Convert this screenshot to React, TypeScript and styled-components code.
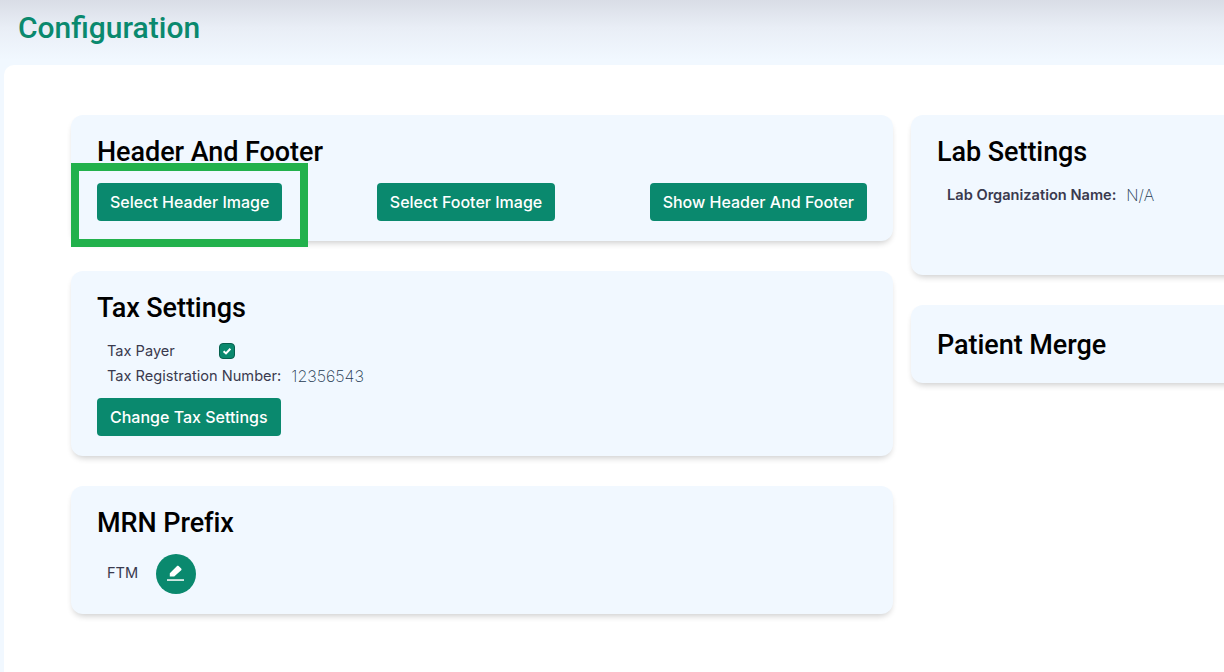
import styled, { createGlobalStyle } from 'styled-components';

const GlobalStyle = createGlobalStyle`
  html, body {
    margin: 0;
    padding: 0;
    height: 672px;
    overflow: hidden;
    background: #f1f8ff;
    font-family: Inter, "Liberation Sans", sans-serif;
  }
`;

const Page = styled.div`
  width: 1224px;
  height: 672px;
  overflow: hidden;
  display: flex;
  flex-direction: column;
  background: linear-gradient(180deg, #d9dde6 0px, #e9eef6 28px, #f1f8ff 60px);
`;

const TopBar = styled.header`
  height: 65px;
  flex: none;
  padding: 10px 0 0 18px;
  box-sizing: border-box;
`;

const PageTitle = styled.h1`
  margin: 0;
  font: 500 30px/36px Roboto, sans-serif;
  color: #0a896e;
`;

const Panel = styled.main`
  flex: 1;
  margin-left: 4px;
  width: 1300px;
  padding: 50px 0 0 67px;
  background: #fff;
  border-radius: 10px 0 0 0;
  display: grid;
  grid-template-columns: 822px 400px;
  column-gap: 18px;
  align-items: start;
`;

const Column = styled.div`
  display: flex;
  flex-direction: column;
  gap: 30px;
`;

const Card = styled.section<{ $height: number }>`
  position: relative;
  box-sizing: border-box;
  height: ${(p) => p.$height}px;
  padding: 21px 26px 0;
  background: #f1f8ff;
  border-radius: 12px;
  box-shadow: 0 4px 6px -2px rgba(0, 0, 0, 0.2);
`;

const CardTitle = styled.h2<{ $offset?: number }>`
  margin: ${(p) => p.$offset ?? 0}px 0 0;
  font: 500 27px/32px Roboto, sans-serif;
  letter-spacing: -0.06px;
  color: #000;
`;

const ButtonRow = styled.div`
  display: flex;
  justify-content: space-between;
  margin-top: 15px;
`;

const ActionButton = styled.button`
  height: 38px;
  padding: 0 13px;
  border: none;
  border-radius: 4px;
  background: #0a896e;
  color: #fff;
  font: 500 16px/38px Inter, sans-serif;
  white-space: nowrap;
`;

const Highlight = styled.div`
  position: absolute;
  left: 0;
  top: 48px;
  width: 237px;
  height: 84px;
  box-sizing: border-box;
  border: 8px solid #22b14c;
`;

const FieldList = styled.div`
  display: flex;
  flex-direction: column;
  gap: 5px;
  margin: 17px 0 12px 10px;
`;

const Field = styled.div`
  display: flex;
  align-items: center;
  height: 20px;
`;

const Label = styled.span<{ $width?: number; $bold?: boolean }>`
  font-size: 14.6px;
  font-weight: ${(p) => (p.$bold ? 600 : 400)};
  color: #3a3a4e;
  white-space: nowrap;
  ${(p) => (p.$width ? `width: ${p.$width}px;` : '')}
`;

const PrefixLabel = styled(Label)`
  padding-bottom: 2px;
`;

const Value = styled.span`
  margin-left: 10px;
  font-size: 16px;
  font-weight: 200;
  color: #1f3a52;
`;

const CheckBox = styled.span`
  width: 16px;
  height: 16px;
  border-radius: 4px;
  background: #0a896e;
  border: 1px solid #06604d;
  box-sizing: border-box;
  display: flex;
  align-items: center;
  justify-content: center;
`;

const PrefixRow = styled.div`
  display: flex;
  align-items: center;
  gap: 18px;
  margin: 15px 0 0 10px;
`;

const IconButton = styled.button`
  width: 40px;
  height: 40px;
  padding: 0;
  border: none;
  border-radius: 50%;
  background: #0a896e;
  display: flex;
  align-items: center;
  justify-content: center;
`;

const LabRow = styled.div`
  display: flex;
  align-items: center;
  margin: 17px 0 0 10px;
`;

export default function App() {
  return (
    <>
      <GlobalStyle />
      <Page>
        <TopBar>
          <PageTitle>Configuration</PageTitle>
        </TopBar>
        <Panel>
          <Column>
            <Card $height={126}>
              <CardTitle>Header And Footer</CardTitle>
              <ButtonRow>
                <ActionButton>Select Header Image</ActionButton>
                <ActionButton>Select Footer Image</ActionButton>
                <ActionButton>Show Header And Footer</ActionButton>
              </ButtonRow>
              <Highlight />
            </Card>
            <Card $height={185}>
              <CardTitle>Tax Settings</CardTitle>
              <FieldList>
                <Field>
                  <Label $width={112}>Tax Payer</Label>
                  <CheckBox>
                    <svg width="12" height="12" viewBox="0 0 12 12">
                      <path d="M2.6 6.2 5 8.4 9.4 3.8" fill="none" stroke="#fff" strokeWidth="2.1" />
                    </svg>
                  </CheckBox>
                </Field>
                <Field>
                  <Label>Tax Registration Number:</Label>
                  <Value>12356543</Value>
                </Field>
              </FieldList>
              <ActionButton>Change Tax Settings</ActionButton>
            </Card>
            <Card $height={128}>
              <CardTitle>MRN Prefix</CardTitle>
              <PrefixRow>
                <PrefixLabel>FTM</PrefixLabel>
                <IconButton aria-label="Edit">
                  <svg width="20" height="20" viewBox="0 0 20 20">
                    <path d="M3.8 12.6V9.2L10.8 2.2C11.4 1.6 12 1.6 12.6 2.1L15.2 4.6C15.7 5.2 15.7 5.8 15.2 6.3L8.2 12.6Z" fill="#fff" />
                    <rect x="1" y="15.3" width="17" height="1.5" fill="#fff" />
                  </svg>
                </IconButton>
              </PrefixRow>
            </Card>
          </Column>
          <Column>
            <Card $height={160}>
              <CardTitle>Lab Settings</CardTitle>
              <LabRow>
                <Label $bold>Lab Organization Name:</Label>
                <Value>N/A</Value>
              </LabRow>
            </Card>
            <Card $height={78}>
              <CardTitle $offset={3}>Patient Merge</CardTitle>
            </Card>
          </Column>
        </Panel>
      </Page>
    </>
  );
}
